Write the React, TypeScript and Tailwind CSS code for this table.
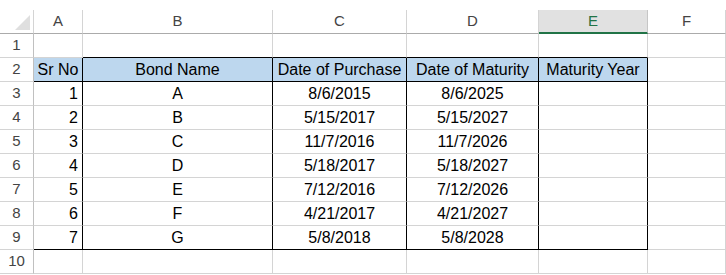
import React from 'react';

// Bond register laid out as a spreadsheet grid
const columns = ['A', 'B', 'C', 'D', 'E', 'F'];
const widths = ['w-[49px]', 'w-[190px]', 'w-[134px]', 'w-[132px]', 'w-[109px]', 'flex-1'];

const bonds = [
  { sr: 1, name: 'A', purchase: '8/6/2015', maturity: '8/6/2025' },
  { sr: 2, name: 'B', purchase: '5/15/2017', maturity: '5/15/2027' },
  { sr: 3, name: 'C', purchase: '11/7/2016', maturity: '11/7/2026' },
  { sr: 4, name: 'D', purchase: '5/18/2017', maturity: '5/18/2027' },
  { sr: 5, name: 'E', purchase: '7/12/2016', maturity: '7/12/2026' },
  { sr: 6, name: 'F', purchase: '4/21/2017', maturity: '4/21/2027' },
  { sr: 7, name: 'G', purchase: '5/8/2018', maturity: '5/8/2028' },
];

const cellBase = 'h-6 shrink-0 border-r border-b flex items-center text-[16px] text-black whitespace-nowrap overflow-hidden';

const RowHeader: React.FC<{ n: number }> = ({ n }) => (
  <div className="w-[34px] h-6 shrink-0 border-r border-b border-r-[#c0c0c0] border-b-[#d4d4d4] flex items-center justify-center text-[15px] text-[#444]">
    {n}
  </div>
);

const App: React.FC = () => {
  const rows: React.ReactNode[] = [];

  // row 1: empty, black bottom under B..E (top edge of the table)
  rows.push(
    <div key={1} className="flex">
      <RowHeader n={1} />
      {widths.map((w, i) => (
        <div
          key={i}
          className={`${cellBase} ${w} border-r-[#d4d4d4] ${i >= 1 && i <= 4 ? 'border-b-black' : 'border-b-[#d4d4d4]'}`}
        />
      ))}
    </div>
  );

  // row 2: headings
  const headings = ['Sr No', 'Bond Name', 'Date of Purchase', 'Date of Maturity', 'Maturity Year'];
  rows.push(
    <div key={2} className="flex">
      <RowHeader n={2} />
      {headings.map((h, i) => (
        <div
          key={i}
          className={`${cellBase} ${widths[i]} bg-[#bdd7ee] justify-center border-r-black border-b-black`}
        >
          {h}
        </div>
      ))}
      <div className={`${cellBase} flex-1 border-r-[#d4d4d4] border-b-[#d4d4d4]`} />
    </div>
  );

  // rows 3..9: data
  bonds.forEach((b, idx) => {
    const last = idx === bonds.length - 1;
    const bottom = last ? 'border-b-black' : 'border-b-[#d4d4d4]';
    rows.push(
      <div key={idx + 3} className="flex">
        <RowHeader n={idx + 3} />
        <div className={`${cellBase} w-[49px] justify-end pr-[4px] border-r-black ${bottom}`}>{b.sr}</div>
        <div className={`${cellBase} w-[190px] justify-center border-r-black ${bottom}`}>{b.name}</div>
        <div className={`${cellBase} w-[134px] justify-center border-r-black ${bottom}`}>{b.purchase}</div>
        <div className={`${cellBase} w-[132px] justify-center border-r-black ${bottom}`}>{b.maturity}</div>
        <div className={`${cellBase} w-[109px] border-r-black ${bottom}`} />
        <div className={`${cellBase} flex-1 border-r-[#d4d4d4] border-b-[#d4d4d4]`} />
      </div>
    );
  });

  // row 10: empty
  rows.push(
    <div key={10} className="flex">
      <RowHeader n={10} />
      {widths.map((w, i) => (
        <div key={i} className={`${cellBase} ${w} border-r-[#d4d4d4] border-b-[#d4d4d4]`} />
      ))}
    </div>
  );

  return (
    <div className="w-[726px] h-[275px] bg-white overflow-hidden" style={{ fontFamily: '"Liberation Sans", Arial, sans-serif' }}>
      <div className="h-[10px]" />
      {/* column letters */}
      <div className="flex">
        <div className="w-[34px] h-6 shrink-0 border-r border-b border-r-[#d4d4d4] border-b-[#ababab] flex items-end justify-end pr-[3px] pb-[3px]">
          <svg width="15" height="15" viewBox="0 0 15 15">
            <polygon points="15,0 15,15 0,15" fill="#dfdfdf" />
          </svg>
        </div>
        {columns.map((c, i) => {
          const selected = c === 'E';
          return (
            <div
              key={c}
              className={`h-6 shrink-0 ${widths[i]} border-r flex items-center justify-center text-[15px] ${
                selected
                  ? 'bg-[#e1e1e1] border-r-[#c6c6c6] border-b-2 border-b-[#217346] text-[#217346]'
                  : 'border-r-[#d4d4d4] border-b border-b-[#ababab] text-[#444]'
              }`}
            >
              {c}
            </div>
          );
        })}
      </div>
      {rows}
    </div>
  );
};

export default App;
